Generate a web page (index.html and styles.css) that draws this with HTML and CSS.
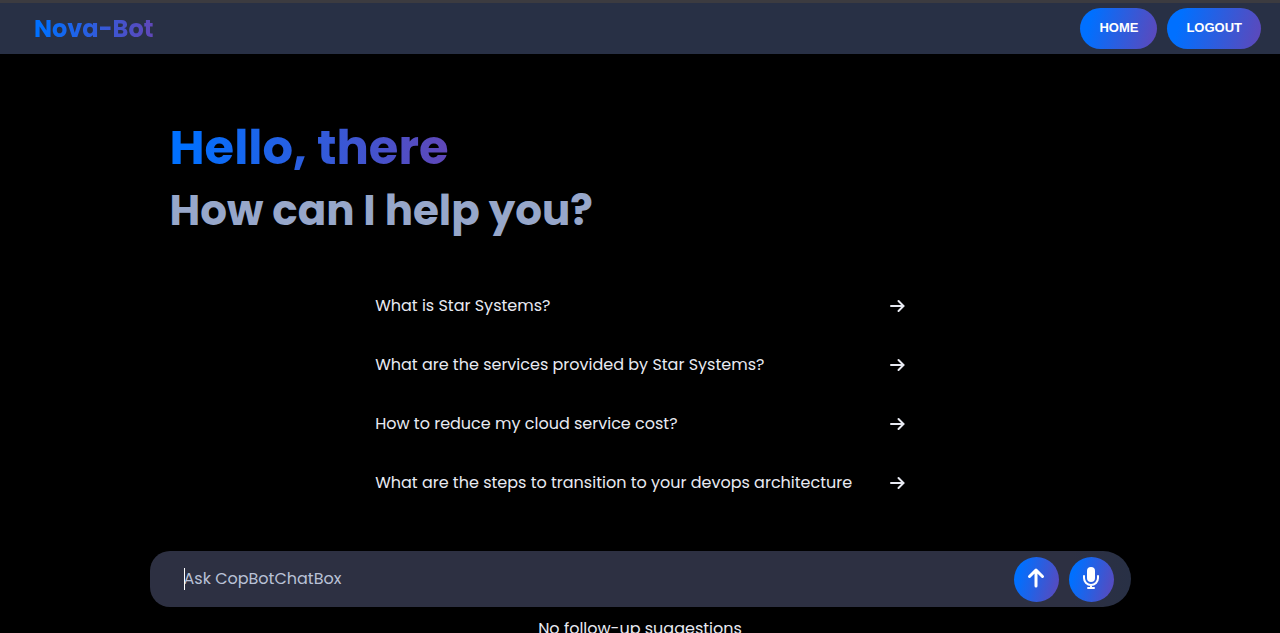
FILE: index.html
```html
<!DOCTYPE html>
<html lang="en">
<head>
<meta charset="utf-8">
<meta name="viewport" content="width=device-width, initial-scale=1">
<title>Nova-Bot</title>
<link rel="stylesheet" href="styles.css">
</head>
<body>
<header class="navbar">
  <a class="brand gradient-text" href="#">Nova-Bot</a>
  <nav class="nav-actions">
    <button class="nav-button" type="button">HOME</button>
    <button class="nav-button" type="button">LOGOUT</button>
  </nav>
</header>
<main class="page">
  <section class="greeting">
    <h1 class="greeting-title gradient-text">Hello, there</h1>
    <p class="greeting-subtitle">How can I help you?</p>
  </section>
  <ul class="suggestions">
    <li><button class="suggestion" type="button"><span>What is Star Systems?</span><svg class="arrow" viewBox="0 0 16 16" aria-hidden="true"><path d="M2 8H14M9.500 3 14.500 8 9.500 13"/></svg></button></li>
    <li><button class="suggestion" type="button"><span>What are the services provided by Star Systems?</span><svg class="arrow" viewBox="0 0 16 16" aria-hidden="true"><path d="M2 8H14M9.500 3 14.500 8 9.500 13"/></svg></button></li>
    <li><button class="suggestion" type="button"><span>How to reduce my cloud service cost?</span><svg class="arrow" viewBox="0 0 16 16" aria-hidden="true"><path d="M2 8H14M9.500 3 14.500 8 9.500 13"/></svg></button></li>
    <li><button class="suggestion" type="button"><span>What are the steps to transition to your devops architecture</span><svg class="arrow" viewBox="0 0 16 16" aria-hidden="true"><path d="M2 8H14M9.500 3 14.500 8 9.500 13"/></svg></button></li>
  </ul>
  <form class="chat-box">
    <div class="chat-field">
      <span class="caret" aria-hidden="true"></span>
      <input class="chat-input" type="text" placeholder="Ask CopBotChatBox" aria-label="Ask CopBotChatBox">
    </div>
    <button class="round-button" type="button" aria-label="Send"><svg viewBox="0 0 24 24" aria-hidden="true"><path class="stroke bold" d="M12 19V3M5.500 9.500 12 3 18.500 9.500"/></svg></button>
    <button class="round-button" type="button" aria-label="Speak"><svg viewBox="0 0 24 24" aria-hidden="true"><rect class="solid" x="8" y="0" width="8" height="15" rx="4"/><path class="stroke" d="M5 9V11a7 7 0 0 0 14 0V9M12 18V21M9 21H15"/></svg></button>
  </form>
  <p class="follow-up">No follow-up suggestions</p>
</main>
</body>
</html>
```
FILE: styles.css
```css
:root {
  --accent: linear-gradient(to right, #0070ff 5%, #6047b8);
  --accent-button: linear-gradient(105deg, #0070ff 15%, #6047b8);
  --font: Poppins, Inter, "Open Sans", sans-serif;
}
* { box-sizing: border-box; }
html, body { height: 100%; }
body {
  margin: 0;
  overflow: hidden;
  background: #000;
  color: #e8eaf2;
  font: 16px/24px var(--font);
}
button { border: 0; font: inherit; color: inherit; cursor: pointer; }
.gradient-text {
  width: fit-content;
  background: var(--accent);
  background-clip: text;
  -webkit-background-clip: text;
  color: transparent;
}
.navbar {
  display: flex;
  align-items: center;
  justify-content: space-between;
  padding: 5px 19px 5px 34px;
  border-top: 3px solid #3c3b40;
  background: #283045;
}
.brand {
  font-size: 24px;
  line-height: 36px;
  font-weight: 700;
  text-decoration: none;
}
.nav-actions { display: flex; gap: 10px; }
.nav-button {
  padding: 0 19px 1px;
  border-radius: 21px;
  background: var(--accent-button);
  color: #fff;
  font: 700 13px/40px "Liberation Sans", Arial, sans-serif;
}
.page {
  max-width: 981px;
  margin: 0 auto;
  padding-top: 62px;
}
.greeting { padding: 0 20px; font-weight: 700; }
.greeting-title { margin: 0; font-size: 48px; line-height: 64px; }
.greeting-subtitle { margin: 0; color: #97a7ca; font-size: 42px; line-height: 62px; }
.suggestions {
  width: 54%;
  margin: 35px auto 0;
  padding: 0;
  list-style: none;
}
.suggestion {
  display: flex;
  align-items: center;
  justify-content: space-between;
  width: 100%;
  padding: 17px 0 18px;
  background: none;
  text-align: left;
}
.arrow {
  width: 16px;
  height: 16px;
  fill: none;
  stroke: currentColor;
  stroke-width: 2;
  stroke-linecap: round;
}
.chat-box {
  display: flex;
  align-items: center;
  gap: 10px;
  margin-top: 38px;
  padding-right: 17px;
  border-radius: 20px 28px 28px 20px;
  background: linear-gradient(to right, #2d3042 94%, #283045);
}
.chat-field {
  position: relative;
  display: flex;
  flex: 1;
}
.chat-input {
  width: 100%;
  padding: 16px 34px;
  border: 0;
  outline: 0;
  background: none;
  color: #fff;
  font: inherit;
}
.chat-input::placeholder { color: #b9c1d6; opacity: 1; }
.caret {
  position: absolute;
  left: 34px;
  top: 17px;
  width: 1px;
  height: 22px;
  background: #fff;
}
.round-button {
  display: grid;
  place-items: center;
  width: 45px;
  height: 45px;
  padding: 0;
  border-radius: 50%;
  background: var(--accent-button);
  color: #fff;
}
.round-button svg { width: 24px; height: 24px; }
.stroke {
  fill: none;
  stroke: currentColor;
  stroke-width: 2;
  stroke-linecap: round;
  stroke-linejoin: round;
}
.bold { stroke-width: 3; }
.solid { fill: currentColor; }
.follow-up { margin: 10px 0 0; text-align: center; }
```
